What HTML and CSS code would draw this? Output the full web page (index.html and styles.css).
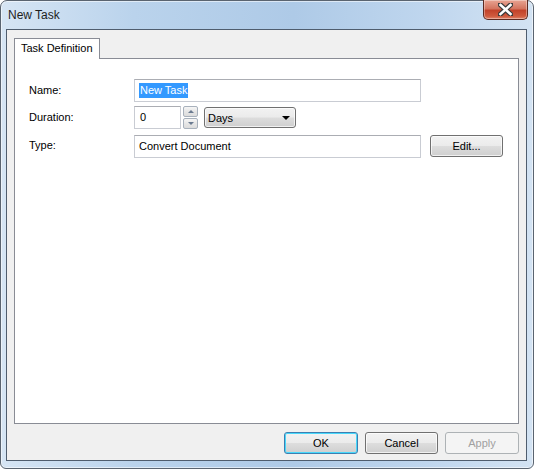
FILE: index.html
```html
<!DOCTYPE html>
<html>

<head lang="en">
    <meta charset="UTF-8">
    <title>New Task</title>
    <link rel="stylesheet" href="styles.css">
</head>

<body>
    <div class="window">
        <div class="title-bar">
            <span class="title-text">New Task</span>
            <a class="close-btn" href="javascript:void(0);">
                <svg width="15" height="13" viewBox="0 0 15 13">
                    <path d="M2 1.5 L13 11.5 M13 1.5 L2 11.5" stroke="#3b3b3b" stroke-width="5" stroke-linecap="square" />
                    <path d="M2.5 2 L12.5 11 M12.5 2 L2.5 11" stroke="#ffffff" stroke-width="2.6" stroke-linecap="square" />
                </svg>
            </a>
        </div>
        <div class="client">
            <div class="tabs">
                <div class="tab">Task Definition</div>
            </div>
            <div class="panel">
                <div class="form">
                    <label>Name:</label>
                    <div class="field">
                        <div class="text-box wide"><span class="selected">New Task</span></div>
                    </div>

                    <label>Duration:</label>
                    <div class="field">
                        <div class="text-box short">0</div>
                        <div class="spinner">
                            <div class="spin-btn"><span class="arrow-up"></span></div>
                            <div class="spin-btn"><span class="arrow-down"></span></div>
                        </div>
                        <div class="combo">
                            <span>Days</span>
                            <span class="combo-arrow"></span>
                        </div>
                    </div>

                    <label>Type:</label>
                    <div class="field">
                        <div class="text-box wide">Convert Document</div>
                        <button class="btn edit-btn">Edit...</button>
                    </div>
                </div>
            </div>
            <div class="button-row">
                <button class="btn default">OK</button>
                <button class="btn">Cancel</button>
                <button class="btn" disabled>Apply</button>
            </div>
        </div>
    </div>
</body>

</html>
```

FILE: styles.css
```css
* {
    padding: 0px;
    margin: 0px;
    box-sizing: border-box;
}

body {
    font-family: "Liberation Sans", Arial, sans-serif;
    font-size: 11px;
    color: #000000;
    background: #ffffff;
}

/* 窗口外框 */
.window {
    width: 534px;
    height: 469px;
    border: 1px solid #5a6470;
    border-radius: 7px 7px 6px 6px;
    background: linear-gradient(90deg, #d6e5f4 0%, #bad3ec 25%, #aecae7 55%, #bfd6ee 80%, #d3e3f3 100%);
    padding: 0px 6px 7px 5px;
    display: flex;
    flex-direction: column;
    box-shadow: inset 0 0 0 1px rgba(255, 255, 255, .55);
}

.title-bar {
    height: 28px;
    position: relative;
    flex: none;
}

.title-text {
    position: absolute;
    left: 2px;
    top: 7px;
    font-size: 12px;
    color: #1e1e1e;
}

/* 关闭按钮 */
.close-btn {
    position: absolute;
    right: -1px;
    top: -1px;
    width: 45px;
    height: 20px;
    border: 1px solid #5b2a22;
    border-top: none;
    border-radius: 0px 0px 5px 5px;
    background: linear-gradient(180deg, #e8a493 0%, #d47560 45%, #c2432b 55%, #cf5a3e 85%, #e0866c 100%);
    box-shadow: inset 0 0 0 1px rgba(255, 255, 255, .35);
    display: flex;
    align-items: center;
    justify-content: center;
}

.close-btn svg {
    display: block;
}

/* 客户区 */
.client {
    flex: 1;
    background: #f0f0f0;
    border: 1px solid #4f5d6e;
    padding: 8px 7px 6px 7px;
    display: flex;
    flex-direction: column;
}

.tabs {
    display: flex;
    height: 20px;
    flex: none;
}

.tab {
    width: 86px;
    height: 21px;
    background: #ffffff;
    border: 1px solid #898c95;
    border-bottom: none;
    padding: 3px 0px 0px 6px;
    position: relative;
    z-index: 1;
}

.panel {
    flex: 1;
    background: #ffffff;
    border: 1px solid #898c95;
    padding: 20px 0px 0px 14px;
}

.form {
    display: grid;
    grid-template-columns: 105px 1fr;
    row-gap: 4px;
    align-items: center;
}

.form label {
    padding-bottom: 1px;
}

.field {
    display: flex;
    align-items: center;
    height: 23px;
}

.field:nth-child(6) {
    height: 24px;
    margin-top: 1px;
}

/* 文本框 */
.text-box {
    height: 23px;
    border: 1px solid #c9ccd3;
    border-top-color: #abadb3;
    background: #ffffff;
    padding: 4px 0px 0px 4px;
    font-size: 11px;
    white-space: nowrap;
}

.text-box.wide {
    width: 287px;
}

.text-box.short {
    width: 47px;
    padding-left: 5px;
}

.selected {
    background: #3399ff;
    color: #ffffff;
    padding: 1px 1px 2px 1px;
}

/* 数字调节按钮 */
.spinner {
    display: flex;
    flex-direction: column;
    margin-left: 2px;
    width: 15px;
    height: 23px;
    justify-content: space-between;
}

.spin-btn {
    height: 11px;
    border: 1px solid #a8b1bc;
    border-radius: 2px;
    background: linear-gradient(180deg, #f6f6f6 0%, #e6e6e6 50%, #dcdcdc 100%);
    display: flex;
    align-items: center;
    justify-content: center;
}

.arrow-up {
    border-left: 3px solid transparent;
    border-right: 3px solid transparent;
    border-bottom: 3px solid #6a7a90;
}

.arrow-down {
    border-left: 3px solid transparent;
    border-right: 3px solid transparent;
    border-top: 3px solid #6a7a90;
}

/* 下拉框 */
.combo {
    margin-left: 6px;
    width: 92px;
    height: 21px;
    border: 1px solid #707070;
    border-radius: 3px;
    background: linear-gradient(180deg, #f2f2f2 0%, #ebebeb 49%, #dddddd 51%, #cfcfcf 100%);
    box-shadow: inset 0 0 0 1px rgba(255, 255, 255, .7);
    display: flex;
    align-items: center;
    justify-content: space-between;
    padding: 1px 5px 0px 3px;
    font-size: 11px;
}

.combo-arrow {
    border-left: 4px solid transparent;
    border-right: 4px solid transparent;
    border-top: 4px solid #000000;
}

/* 按钮 */
.btn {
    font-family: "Liberation Sans", Arial, sans-serif;
    font-size: 11px;
    color: #000000;
    width: 73px;
    height: 22px;
    border: 1px solid #707070;
    border-radius: 3px;
    background: linear-gradient(180deg, #f2f2f2 0%, #ebebeb 49%, #dddddd 51%, #cfcfcf 100%);
    box-shadow: inset 0 0 0 1px rgba(255, 255, 255, .7);
}

.btn.default {
    width: 74px;
    border-color: #3c7fb1;
    box-shadow: inset 0 0 0 1px #48d8fb;
}

.btn:disabled {
    width: 74px;
    color: #a0a0a0;
    border-color: #adb2b5;
    background: #f4f4f4;
    box-shadow: none;
}

.edit-btn {
    margin-left: 9px;
}

.button-row {
    display: flex;
    justify-content: flex-end;
    gap: 7px;
    padding-top: 8px;
    flex: none;
}
```
